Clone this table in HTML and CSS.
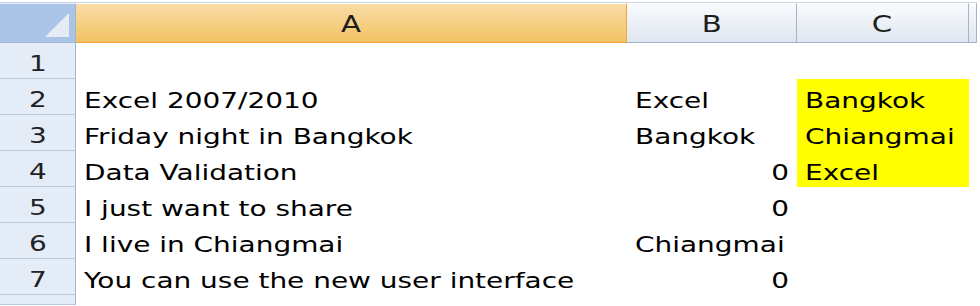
FILE: index.html
```html
<!DOCTYPE html>
<html lang="en">
<head>
    <meta charset="UTF-8">
    <meta name="viewport" content="width=device-width, initial-scale=1.0">
    <title>Data Validation</title>
    <link rel="stylesheet" href="styles.css">
</head>
<body>
    <div class="sheet">
        <div class="row head-row">
            <div class="corner"><span class="corner-mark"></span></div>
            <div class="col-head col-a selected"><span class="txt">A</span></div>
            <div class="col-head col-b"><span class="txt">B</span></div>
            <div class="col-head col-c"><span class="txt">C</span></div>
            <div class="col-head col-d"></div>
        </div>
        <div class="row">
            <div class="row-head"><span class="txt">1</span></div>
            <div class="cell col-a"></div>
            <div class="cell col-b"></div>
            <div class="cell col-c"></div>
        </div>
        <div class="row">
            <div class="row-head"><span class="txt">2</span></div>
            <div class="cell col-a"><span class="txt">Excel 2007/2010</span></div>
            <div class="cell col-b"><span class="txt">Excel</span></div>
            <div class="cell col-c list"><span class="txt">Bangkok</span></div>
        </div>
        <div class="row">
            <div class="row-head"><span class="txt">3</span></div>
            <div class="cell col-a"><span class="txt">Friday night in Bangkok</span></div>
            <div class="cell col-b"><span class="txt">Bangkok</span></div>
            <div class="cell col-c list"><span class="txt">Chiangmai</span></div>
        </div>
        <div class="row">
            <div class="row-head"><span class="txt">4</span></div>
            <div class="cell col-a"><span class="txt">Data Validation</span></div>
            <div class="cell col-b num"><span class="txt">0</span></div>
            <div class="cell col-c list"><span class="txt">Excel</span></div>
        </div>
        <div class="row">
            <div class="row-head"><span class="txt">5</span></div>
            <div class="cell col-a"><span class="txt">I just want to share</span></div>
            <div class="cell col-b num"><span class="txt">0</span></div>
            <div class="cell col-c"></div>
        </div>
        <div class="row">
            <div class="row-head"><span class="txt">6</span></div>
            <div class="cell col-a"><span class="txt">I live in Chiangmai</span></div>
            <div class="cell col-b"><span class="txt">Chiangmai</span></div>
            <div class="cell col-c"></div>
        </div>
        <div class="row">
            <div class="row-head"><span class="txt">7</span></div>
            <div class="cell col-a"><span class="txt">You can use the new user interface</span></div>
            <div class="cell col-b num"><span class="txt">0</span></div>
            <div class="cell col-c"></div>
        </div>
        <div class="row last-row">
            <div class="row-head"></div>
            <div class="cell col-a"></div>
            <div class="cell col-b"></div>
            <div class="cell col-c"></div>
        </div>
    </div>
</body>
</html>
```

FILE: styles.css
```css
body {
    margin: 0;
    background: #fff;
    font-family: 'DejaVu Sans', Verdana, sans-serif;
    color: #000;
    overflow: hidden;
}
.sheet {
    margin-top: 2px;
    border-top: 1px solid #c9d5e3;
    width: 977px;
}
.row {
    display: flex;
    height: 36px;
}
.head-row {
    height: 40px;
}
.last-row {
    height: 10px;
}
/* column widths */
.col-a { width: 551px; }
.col-b { width: 170px; }
.col-c { width: 172px; }
.col-d { flex: 1; }

/* the screen font is drawn wide, so stretch each text run */
.txt {
    display: inline-block;
    transform: scaleX(1.27);
    transform-origin: left center;
}

.corner {
    position: relative;
    width: 76px;
    box-sizing: border-box;
    background: #aac4e8;
    border-right: 1px solid #9eb6ce;
    border-bottom: 1px solid #9eb6ce;
    border-top: 1px solid #e6eef9;
}
.corner-mark {
    position: absolute;
    right: 6px;
    bottom: 5px;
    width: 0;
    height: 0;
    border-left: 24px solid transparent;
    border-bottom: 24px solid #e6ecf4;
}
.col-head {
    box-sizing: border-box;
    display: flex;
    align-items: center;
    justify-content: center;
    padding-top: 2px;
    font-size: 23px;
    color: #1e1e1e;
    background: linear-gradient(#f9fbfd, #dfe6ef);
    border-right: 1px solid #9eb6ce;
    border-bottom: 1px solid #9eb6ce;
    border-top: 1px solid #fff;
}
.col-head .txt {
    transform-origin: center;
}
.col-head.selected {
    background: linear-gradient(#f9dca6, #f2c363);
    border-right-color: #f0a63c;
    border-bottom-color: #f0a63c;
}
.col-d {
    border-right: 1px solid #9eb6ce;
}
.row-head {
    width: 76px;
    box-sizing: border-box;
    display: flex;
    align-items: flex-end;
    justify-content: center;
    padding-bottom: 2px;
    font-size: 22px;
    color: #222;
    background: #e4ecf7;
    border-right: 1px solid #9eb6ce;
    border-bottom: 1px solid #b8c9dc;
}
.row-head .txt {
    transform-origin: center;
}
.cell {
    box-sizing: border-box;
    display: flex;
    align-items: flex-end;
    padding: 0 8px 2px 8px;
    font-size: 22px;
    white-space: nowrap;
}
.cell.num {
    justify-content: flex-end;
}
.cell.num .txt {
    transform-origin: right center;
}
.cell.list {
    background: #ffff00;
}
```
